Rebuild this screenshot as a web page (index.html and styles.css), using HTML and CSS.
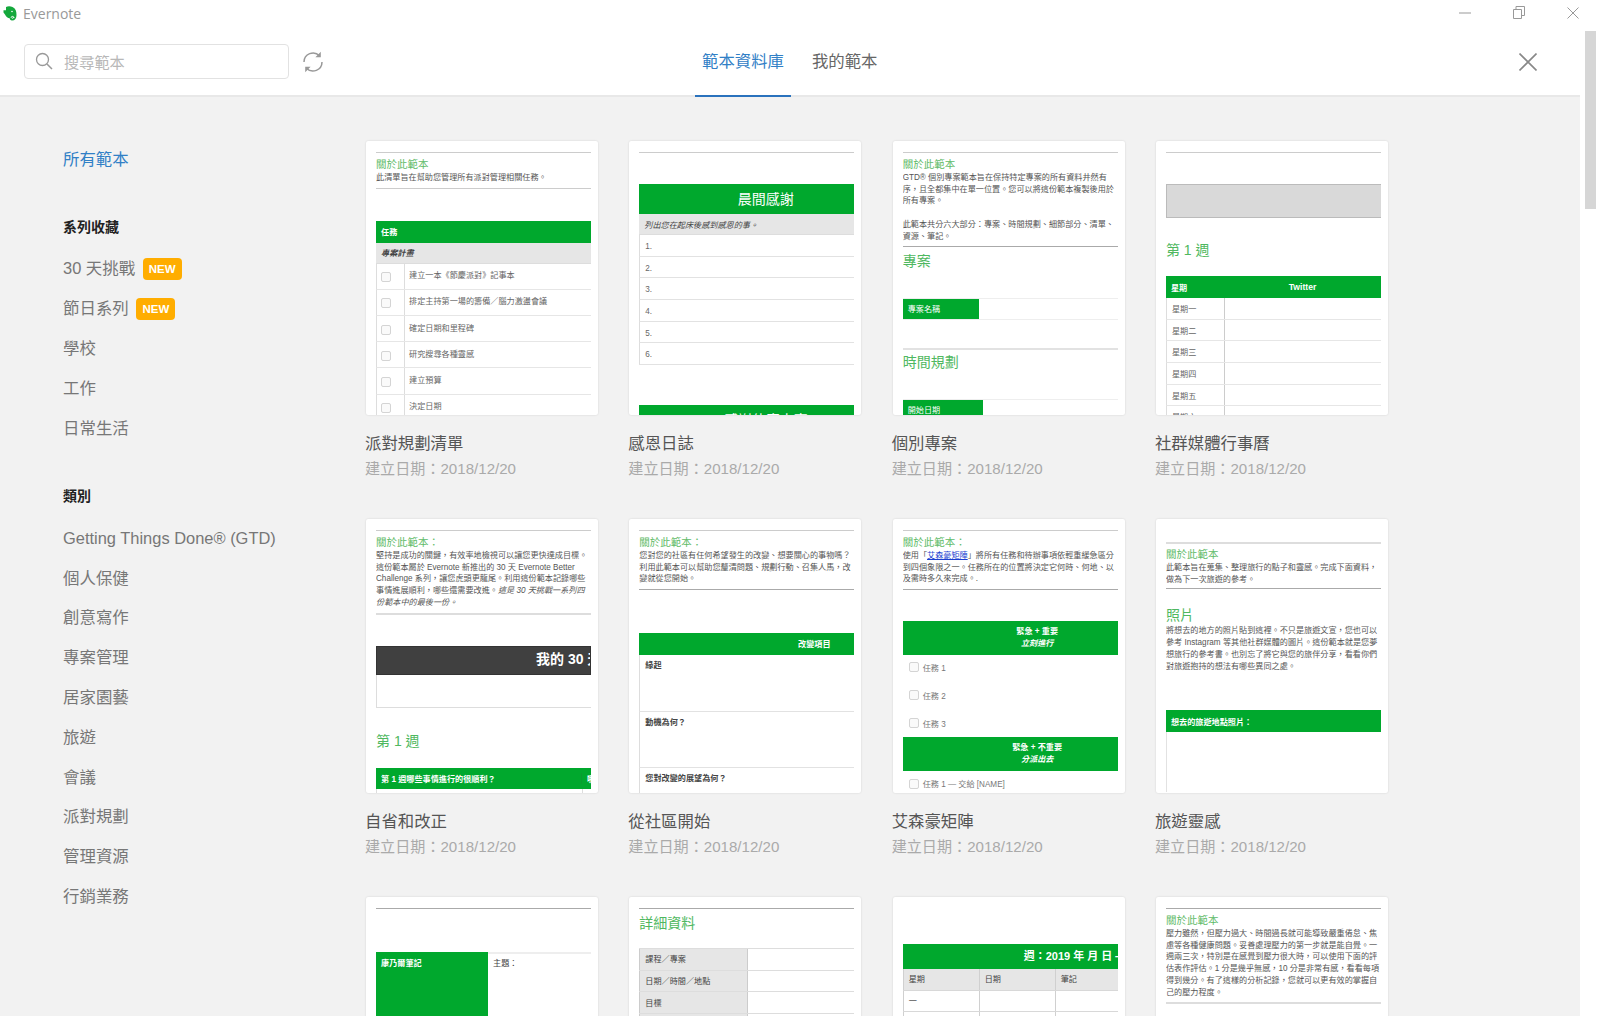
FILE: index.html
```html
<!DOCTYPE html>
<html lang="zh-Hant">
<head>
    <meta charset="UTF-8">
    <title>Evernote</title>
    <link rel="stylesheet" href="styles.css">
</head>
<body>
    <div class="titlebar">
        <div class="app-name">
            <svg class="logo" viewBox="0 0 14 15" width="14" height="15">
                <path fill="#14a83c" d="M3 1C5-.2 7.500 0 9.500 1 12.500 2.300 13.500 5 13.500 9c0 3.500-1.500 5.500-4.500 5.500-1.500 0-2.300-1-2.300-2.200C5 12 3 11 2 8.500L.5 6.500V4.200H3z"/>
                <path fill="none" stroke="#fff" stroke-width="1" d="M8 11.500c.5-1.500 2.500-1.500 3 0M11 11c-.5 1.500-2 1.500-2.500.7"/>
                <circle cx="9" cy="5.500" r=".8" fill="#fff"/>
            </svg>
            <span>Evernote</span>
        </div>
        <div class="win-controls">
            <svg class="win-min" width="12" height="12" viewBox="0 0 12 12"><path d="M0 6h12" stroke="#999" fill="none"/></svg>
            <svg class="win-restore" width="12" height="13" viewBox="0 0 12 13"><path d="M.5 3.500h8v9h-8zM3 3.500v-3h8.500v9h-3" stroke="#999" fill="none"/></svg>
            <svg class="win-close" width="12" height="12" viewBox="0 0 12 12"><path d="M.5.500l11 11M11.500.500l-11 11" stroke="#999" fill="none"/></svg>
        </div>
    </div>

    <div class="app">
        <div class="window">
            <header class="topbar">
                <div class="search-area">
                    <div class="search">
                        <svg width="18" height="18" viewBox="0 0 18 18"><circle cx="7.500" cy="7.500" r="6" fill="none" stroke="#999" stroke-width="1.300"/><path d="M12 12l5 5" stroke="#999" stroke-width="1.500"/></svg>
                        <span>搜尋範本</span>
                    </div>
                    <svg class="refresh" width="22" height="22" viewBox="0 0 22 22">
                        <path d="M2 11a9 9 0 0 1 15.500-6.200M20 11a9 9 0 0 1-15.500 6.200" fill="none" stroke="#999" stroke-width="1.500"/>
                        <path d="M18.800.800v5.400h-5.400zM3.200 21.200v-5.400h5.400z" fill="#999"/>
                    </svg>
                </div>
                <nav class="tabs">
                    <a class="tab active">範本資料庫</a>
                    <a class="tab">我的範本</a>
                </nav>
                <svg class="close-panel" width="18" height="18" viewBox="0 0 18 18"><path d="M.5.500l17 17M17.500.500l-17 17" stroke="#888" stroke-width="1.600" fill="none"/></svg>
            </header>

            <div class="main">
                <aside class="sidebar">
                    <a class="side-all">所有範本</a>
                    <h3>系列收藏</h3>
                    <a class="side-item">30 天挑戰 <span class="badge">NEW</span></a>
                    <a class="side-item">節日系列 <span class="badge">NEW</span></a>
                    <a class="side-item">學校</a>
                    <a class="side-item">工作</a>
                    <a class="side-item">日常生活</a>
                    <h3>類別</h3>
                    <a class="side-item">Getting Things Done® (GTD)</a>
                    <a class="side-item">個人保健</a>
                    <a class="side-item">創意寫作</a>
                    <a class="side-item">專案管理</a>
                    <a class="side-item">居家園藝</a>
                    <a class="side-item">旅遊</a>
                    <a class="side-item">會議</a>
                    <a class="side-item">派對規劃</a>
                    <a class="side-item">管理資源</a>
                    <a class="side-item">行銷業務</a>
                </aside>

                <section class="grid">
                    <!-- row 1 -->
                    <article>
                        <div class="card"><div class="thumb">
                            <div class="rule"></div>
                            <div class="about">關於此範本</div>
                            <div class="desc">此清單旨在幫助您管理所有派對管理相關任務。</div>
                            <div class="rule mt-4"></div>
                            <div class="bar mt-32">任務</div>
                            <div class="gray-row bold-italic">專案計畫</div>
                            <div class="task"><i class="box"></i><span>建立一本《節慶派對》記事本</span></div>
                            <div class="task"><i class="box"></i><span>排定主持第一場的籌備／腦力激盪會議</span></div>
                            <div class="task"><i class="box"></i><span>確定日期和里程碑</span></div>
                            <div class="task"><i class="box"></i><span>研究搜尋各種靈感</span></div>
                            <div class="task"><i class="box"></i><span>建立預算</span></div>
                            <div class="task"><i class="box"></i><span>決定日期</span></div>
                        </div></div>
                        <h4>派對規劃清單</h4>
                        <p class="date">建立日期：2018/12/20</p>
                    </article>

                    <article>
                        <div class="card"><div class="thumb">
                            <div class="rule"></div>
                            <div class="bar bar-title mt-31">晨間感謝</div>
                            <div class="gray-row italic">列出您在起床後感到感恩的事。</div>
                            <div class="line-row">1.</div>
                            <div class="line-row">2.</div>
                            <div class="line-row">3.</div>
                            <div class="line-row">4.</div>
                            <div class="line-row">5.</div>
                            <div class="line-row">6.</div>
                            <div class="bar bar-title mt-40">感謝什麼人事</div>
                        </div></div>
                        <h4>感恩日誌</h4>
                        <p class="date">建立日期：2018/12/20</p>
                    </article>

                    <article>
                        <div class="card"><div class="thumb">
                            <div class="rule"></div>
                            <div class="about">關於此範本</div>
                            <div class="desc">GTD® 個別專案範本旨在保持特定專案的所有資料井然有<br>序，且全都集中在單一位置。您可以將這份範本複製後用於<br>所有專案。<br><br>此範本共分六大部分：專案、時間規劃、細節部分、清單、<br>資源、筆記。</div>
                            <div class="rule dark mt-4"></div>
                            <div class="big mt-4">專案</div>
                            <div class="field mt-27"><span class="field-name w-76">專案名稱</span></div>
                            <div class="rule soft mt-28"></div>
                            <div class="big mt-2">時間規劃</div>
                            <div class="field mt-27"><span class="field-name w-80">開始日期</span></div>
                        </div></div>
                        <h4>個別專案</h4>
                        <p class="date">建立日期：2018/12/20</p>
                    </article>

                    <article>
                        <div class="card"><div class="thumb">
                            <div class="rule"></div>
                            <div class="gray-box mt-31"></div>
                            <div class="big mt-22">第 1 週</div>
                            <div class="bar cols mt-16"><span class="day-col">星期</span><span class="twitter">Twitter</span></div>
                            <div class="day-row"><span class="day-col">星期一</span></div>
                            <div class="day-row"><span class="day-col">星期二</span></div>
                            <div class="day-row"><span class="day-col">星期三</span></div>
                            <div class="day-row"><span class="day-col">星期四</span></div>
                            <div class="day-row"><span class="day-col">星期五</span></div>
                            <div class="day-row"><span class="day-col">星期六</span></div>
                        </div></div>
                        <h4>社群媒體行事曆</h4>
                        <p class="date">建立日期：2018/12/20</p>
                    </article>

                    <!-- row 2 -->
                    <article>
                        <div class="card"><div class="thumb">
                            <div class="rule"></div>
                            <div class="about">關於此範本：</div>
                            <div class="desc">堅持是成功的關鍵，有效率地檢視可以讓您更快達成目標。<br>這份範本屬於 Evernote 新推出的 30 天 Evernote Better<br>Challenge 系列，讓您虎頭更龍尾。利用這份範本記錄哪些<br>事情進展順利，哪些還需要改進。<em>這是 30 天挑戰一系列四<br>份範本中的最後一份。</em></div>
                            <div class="rule thick mt-4"></div>
                            <div class="dark-bar mt-31">我的 30 天挑戰</div>
                            <div class="empty-box"></div>
                            <div class="big mt-23">第 1 週</div>
                            <div class="bar cols mt-17 h-21"><span class="q-col">第 1 週哪些事情進行的很順利？</span><span class="q-next">哪些事情</span></div>
                            <div class="q-row"><span class="q-col"></span></div>
                        </div></div>
                        <h4>自省和改正</h4>
                        <p class="date">建立日期：2018/12/20</p>
                    </article>

                    <article>
                        <div class="card"><div class="thumb">
                            <div class="rule"></div>
                            <div class="about">關於此範本：</div>
                            <div class="desc">您對您的社區有任何希望發生的改變、想要關心的事物嗎？<br>利用此範本可以幫助您釐清問題、規劃行動、召集人馬，改<br>變就從您開始。</div>
                            <div class="rule dark mt-4"></div>
                            <div class="bar bar-change mt-43">改變項目</div>
                            <div class="note-row">緣起</div>
                            <div class="note-row">動機為何？</div>
                            <div class="note-row">您對改變的展望為何？</div>
                        </div></div>
                        <h4>從社區開始</h4>
                        <p class="date">建立日期：2018/12/20</p>
                    </article>

                    <article>
                        <div class="card"><div class="thumb">
                            <div class="rule"></div>
                            <div class="about">關於此範本：</div>
                            <div class="desc">使用「<a class="link">艾森豪矩陣</a>」將所有任務和待辦事項依輕重緩急區分<br>到四個象限之一。任務所在的位置將決定它何時、何地、以<br>及需時多久來完成。.</div>
                            <div class="rule dark mt-4"></div>
                            <div class="bar bar-quad mt-31">緊急 + 重要<br><em>立刻進行</em></div>
                            <div class="checks">
                                <div class="check"><i class="box"></i>任務 1</div>
                                <div class="check"><i class="box"></i>任務 2</div>
                                <div class="check"><i class="box"></i>任務 3</div>
                            </div>
                            <div class="bar bar-quad">緊急 + 不重要<br><em>分派出去</em></div>
                            <div class="check check-last"><i class="box"></i>任務 1 — 交給 [NAME]</div>
                        </div></div>
                        <h4>艾森豪矩陣</h4>
                        <p class="date">建立日期：2018/12/20</p>
                    </article>

                    <article>
                        <div class="card"><div class="thumb">
                            <div class="rule thick mt-12"></div>
                            <div class="about tight">關於此範本</div>
                            <div class="desc">此範本旨在蒐集、整理旅行的點子和靈感。完成下面資料，<br>做為下一次旅遊的參考。</div>
                            <div class="rule dark mt-3"></div>
                            <div class="big mt-16">照片</div>
                            <div class="desc flush">將想去的地方的照片貼到這裡。不只是旅遊文宣，您也可以<br>參考 Instagram 等其他社群媒體的圖片。這份範本就是您夢<br>想旅行的參考書。也別忘了將它與您的旅伴分享，看看你們<br>對旅遊抱持的想法有哪些異同之處。</div>
                            <div class="bar mt-38">想去的旅遊地點照片：</div>
                            <div class="photo-cell"></div>
                        </div></div>
                        <h4>旅遊靈感</h4>
                        <p class="date">建立日期：2018/12/20</p>
                    </article>

                    <!-- row 3, cut off by the window -->
                    <article>
                        <div class="card"><div class="thumb">
                            <div class="rule dark"></div>
                            <div class="cornell mt-43">
                                <div class="cornell-side">康乃爾筆記</div>
                                <div class="cornell-main">主題：</div>
                            </div>
                        </div></div>
                    </article>

                    <article>
                        <div class="card"><div class="thumb">
                            <div class="rule dark"></div>
                            <div class="big mt-4">詳細資料</div>
                            <div class="detail mt-15"><span class="detail-name">課程／專案</span></div>
                            <div class="detail"><span class="detail-name">日期／時間／地點</span></div>
                            <div class="detail"><span class="detail-name">目標</span></div>
                            <div class="detail"><span class="detail-name"></span></div>
                        </div></div>
                    </article>

                    <article>
                        <div class="card"><div class="thumb">
                            <div class="bar bar-week mt-36">週：2019 年 月 日 — 月 日</div>
                            <div class="week-head"><span>星期</span><span>日期</span><span>筆記</span></div>
                            <div class="week-row"><span>一</span><span></span><span></span></div>
                            <div class="week-row"><span></span><span></span><span></span></div>
                        </div></div>
                    </article>

                    <article>
                        <div class="card"><div class="thumb">
                            <div class="rule dark"></div>
                            <div class="about">關於此範本</div>
                            <div class="desc">壓力雖然，但壓力過大、時間過長就可能導致嚴重倦怠、焦<br>慮等各種健康問題。妥善處理壓力的第一步就是能自覺。一<br>週兩三次，特別是在感覺到壓力很大時，可以使用下面的評<br>估表作評估。1 分是幾乎無感，10 分是非常有感，看看每項<br>得到幾分。有了這樣的分析記錄，您就可以更有效的掌握自<br>己的壓力程度。</div>
                            <div class="rule thick mt-4"></div>
                        </div></div>
                    </article>
                </section>
            </div>
        </div>

        <div class="scrollbar"><div class="thumb-bar"></div></div>
    </div>
</body>
</html>
```

FILE: styles.css
```css
* {
    box-sizing: border-box;
}

html, body {
    margin: 0;
    height: 1016px;
    overflow: hidden;
}

body {
    font-family: "Liberation Sans", "Noto Sans CJK TC", sans-serif;
    background: #fff;
    color: #555;
}

/* title bar */
.titlebar {
    height: 31px;
    display: flex;
    justify-content: space-between;
    align-items: center;
}

.app-name {
    display: flex;
    align-items: center;
    padding-left: 3px;
    padding-bottom: 5px;
    font-family: "Open Sans", sans-serif;
    font-size: 14px;
    color: #999;
}

.logo {
    margin-right: 6px;
}

.win-controls {
    display: flex;
    align-items: center;
    padding-right: 21px;
    padding-bottom: 6px;
}

.win-min {
    margin-right: 42px;
}

.win-restore {
    margin-right: 42px;
}

/* layout */
.app {
    display: flex;
    height: 985px;
}

.window {
    width: 1580px;
    display: flex;
    flex-direction: column;
    background: #f2f2f2;
}

.scrollbar {
    width: 20px;
    padding-left: 5px;
    background: #fff;
}

.thumb-bar {
    width: 11px;
    height: 178px;
    background: #d6d6d6;
}

/* top bar */
.topbar {
    height: 66px;
    flex: none;
    display: flex;
    background: #fff;
    border-bottom: 2px solid #e8e8e8;
}

.search-area {
    width: 695px;
    padding: 13px 0 0 24px;
    display: flex;
    align-items: flex-start;
}

.search {
    width: 265px;
    height: 35px;
    display: flex;
    align-items: center;
    padding: 0 0 2px 10px;
    border: 1px solid #e2e2e2;
    border-radius: 4px;
    font-size: 15.2px;
    color: #b8b8b8;
}

.search span {
    margin-left: 11px;
}

.refresh {
    margin: 7px 0 0 13px;
}

.tabs {
    display: flex;
    height: 66px;
}

.tab {
    padding: 18px 7px 0;
    margin-right: 14px;
    font-size: 16.4px;
    line-height: 24px;
    color: #666;
    border-bottom: 2px solid transparent;
}

.tab.active {
    color: #3180c6;
    border-bottom-color: #2a72bd;
}

.close-panel {
    margin: 22px 43px 0 auto;
}

/* sidebar */
.main {
    flex: 1;
    display: flex;
    min-height: 0;
    overflow: hidden;
}

.sidebar {
    width: 366px;
    flex: none;
    padding: 42px 0 0 63px;
}

.sidebar a, .sidebar h3 {
    display: block;
    margin: 0;
}

.side-all {
    font-size: 16.4px;
    line-height: 40px;
    color: #3180c6;
}

.sidebar h3 {
    margin-top: 28px;
    margin-bottom: 2.4px;
    font-size: 14px;
    line-height: 40px;
    font-weight: bold;
    color: #222;
}

.side-item {
    height: 39.8px;
    line-height: 39.8px;
    font-size: 16.45px;
    color: #777;
    white-space: nowrap;
}

.badge {
    display: inline-block;
    width: 39px;
    height: 22px;
    margin-left: 3px;
    vertical-align: 1px;
    line-height: 22px;
    text-align: center;
    font-size: 11.5px;
    font-weight: bold;
    color: #fff;
    background: #ffad00;
    border-radius: 4px;
}

/* cards */
.grid {
    display: grid;
    grid-template-columns: repeat(4, 232px);
    column-gap: 31.33px;
    row-gap: 38px;
    align-content: start;
    padding-top: 44px;
}

.card {
    height: 274px;
    padding: 11px 7px 0 10px;
    background: #fff;
    border-radius: 2px;
    box-shadow: 0 0 2px rgba(0, 0, 0, .15);
}

.thumb {
    height: 263px;
    overflow: hidden;
}

article h4 {
    margin: 16px 0 2px -1px;
    font-size: 16.4px;
    line-height: 24px;
    font-weight: normal;
    color: #555;
}

.date {
    margin: 0 0 0 -1px;
    font-size: 15.1px;
    line-height: 24px;
    color: #aaa;
}

/* thumbnail blocks */
.rule {
    height: 1px;
    background: #ccc;
}

.rule.dark {
    background: #aaa;
}

.rule.soft {
    height: 2px;
    background: #e2e2e2;
}

.rule.thick {
    height: 2px;
    background: #ddd;
}

.about {
    margin-top: 4px;
    font-size: 10.5px;
    line-height: 14px;
    color: #5fbb68;
    white-space: nowrap;
}

.about.tight {
    margin-top: 3px;
}

.desc {
    margin-top: 1px;
    font-size: 8.15px;
    line-height: 11.7px;
    color: #555;
    white-space: nowrap;
}

.desc.flush {
    margin-top: 0;
}

.link {
    color: #1a3fd0;
    text-decoration: underline;
}

.big {
    font-size: 14px;
    line-height: 20px;
    color: #4fb860;
}

.bar {
    height: 22px;
    display: flex;
    align-items: center;
    padding: 0 5px;
    font-size: 8.15px;
    font-weight: bold;
    color: #fff;
    background: #00a82d;
    white-space: nowrap;
}

.bar-title {
    height: 30px;
    justify-content: center;
    padding: 0 0 2px 38px;
    font-size: 14px;
    font-weight: normal;
}

.bar-change {
    justify-content: center;
    padding: 0 0 2px 135px;
}

.bar-quad {
    height: 34px;
    display: block;
    padding: 5px 0 0 54px;
    text-align: center;
    line-height: 12px;
}

.bar-week {
    height: 25px;
    padding: 0 0 3px 121px;
    font-size: 11px;
}

.h-21 {
    height: 21px;
}

.gray-row {
    height: 21px;
    display: flex;
    align-items: center;
    padding-left: 5px;
    font-size: 8.15px;
    color: #444;
    background: #e6e6e6;
    border-bottom: 1px solid #ddd;
}

.bold-italic {
    font-weight: bold;
    font-style: italic;
}

.italic {
    font-style: italic;
}

.box {
    flex: none;
    width: 10px;
    height: 10px;
    border: 1px solid #d4d4d4;
    border-radius: 2px;
    background: #fafafa;
}

.task {
    height: 26.2px;
    display: flex;
    border-left: 1px solid #ddd;
    border-bottom: 1px solid #e6e6e6;
    font-size: 8.15px;
    color: #666;
}

.task .box {
    margin: 8.5px 13px 0 4px;
}

.task span {
    padding: 5.5px 0 0 4px;
    border-left: 1px solid #ddd;
    white-space: nowrap;
}

.line-row {
    height: 21.7px;
    padding: 7px 0 0 5px;
    font-size: 8.15px;
    color: #666;
    border-left: 1px solid #ddd;
    border-bottom: 1px solid #e2e2e2;
}

.field {
    height: 22px;
    display: flex;
    border-top: 1px solid #eee;
    border-bottom: 1px solid #eee;
}

.field-name {
    display: flex;
    align-items: center;
    padding: 0 0 2px 5px;
    font-size: 8.15px;
    color: #fff;
    background: #00a82d;
}

.w-76 {
    width: 76px;
}

.w-80 {
    width: 80px;
}

.gray-box {
    height: 34px;
    background: #d9d9d9;
    border: 1px solid #bbb;
    border-right: 0;
}

.cols {
    padding: 0;
}

.day-col {
    width: 58px;
    flex: none;
    padding-left: 5px;
}

.twitter {
    flex: 1;
    font-size: 8.6px;
    text-align: center;
}

.day-row {
    height: 21.7px;
    display: flex;
    align-items: center;
    font-size: 8.15px;
    color: #666;
    border-left: 1px solid #ddd;
    border-bottom: 1px solid #e6e6e6;
}

.day-row .day-col {
    height: 100%;
    display: flex;
    align-items: center;
    border-right: 1px solid #ccc;
}

.dark-bar {
    height: 29px;
    padding-left: 159px;
    font-size: 14px;
    font-weight: bold;
    line-height: 24px;
    color: #fff;
    background: #404040;
    white-space: nowrap;
    overflow: hidden;
    border: 1px solid #333;
}

.empty-box {
    height: 33px;
    border-left: 1px solid #ddd;
    border-bottom: 1px solid #ddd;
}

.q-col {
    width: 206px;
    flex: none;
    padding-left: 5px;
    border-right: 1px solid #0a9a30;
}

.q-next {
    padding-left: 5px;
}

.q-row {
    height: 10px;
    border-left: 1px solid #ddd;
}

.q-row .q-col {
    display: block;
    height: 10px;
    border-right-color: #ddd;
}

.note-row {
    height: 56.5px;
    padding: 4px 0 0 5px;
    font-size: 8.15px;
    font-weight: bold;
    color: #444;
    border-left: 1px solid #ddd;
    border-bottom: 1px solid #e2e2e2;
}

.checks {
    margin-top: -2px;
}

.check {
    height: 28px;
    display: flex;
    align-items: center;
    padding-left: 6px;
    font-size: 8.15px;
    color: #777;
    white-space: nowrap;
}

.check-last {
    height: 25px;
}

.check .box {
    margin-right: 4px;
}

.photo-cell {
    height: 60px;
    border-left: 1px solid #e2e2e2;
}

.cornell {
    display: flex;
    height: 100px;
    font-size: 8.15px;
}

.cornell-side {
    width: 112px;
    padding: 5px;
    font-weight: bold;
    color: #fff;
    background: #00a82d;
}

.cornell-main {
    flex: 1;
    padding: 3px 5px;
    color: #444;
    border-top: 2px solid #eee;
}

.detail {
    height: 21.7px;
    display: flex;
    font-size: 8.15px;
    color: #444;
    border-top: 1px solid #ddd;
}

.detail-name {
    width: 109px;
    display: flex;
    align-items: center;
    padding: 0 0 1px 5px;
    background: #e6e6e6;
    border-left: 1px solid #ccc;
    border-right: 1px solid #ccc;
}

.week-head, .week-row {
    height: 21.5px;
    display: grid;
    grid-template-columns: 76px 76px 1fr;
    font-size: 8.15px;
    color: #444;
    border-bottom: 1px solid #d8d8d8;
}

.week-head {
    background: #e6e6e6;
}

.week-head span, .week-row span {
    display: flex;
    align-items: center;
    padding: 0 0 1px 5px;
    border-left: 1px solid #d0d0d0;
}

/* spacing helpers */
.mt-2 { margin-top: 2px; }
.mt-3 { margin-top: 3px; }
.mt-4 { margin-top: 4px; }
.mt-12 { margin-top: 12px; }
.mt-15 { margin-top: 15px; }
.mt-16 { margin-top: 16px; }
.mt-17 { margin-top: 17px; }
.mt-22 { margin-top: 22px; }
.mt-23 { margin-top: 23px; }
.mt-27 { margin-top: 27px; }
.mt-28 { margin-top: 28px; }
.mt-31 { margin-top: 31px; }
.mt-32 { margin-top: 32px; }
.mt-36 { margin-top: 36px; }
.mt-38 { margin-top: 38px; }
.mt-40 { margin-top: 40px; }
.mt-43 { margin-top: 43px; }
```
